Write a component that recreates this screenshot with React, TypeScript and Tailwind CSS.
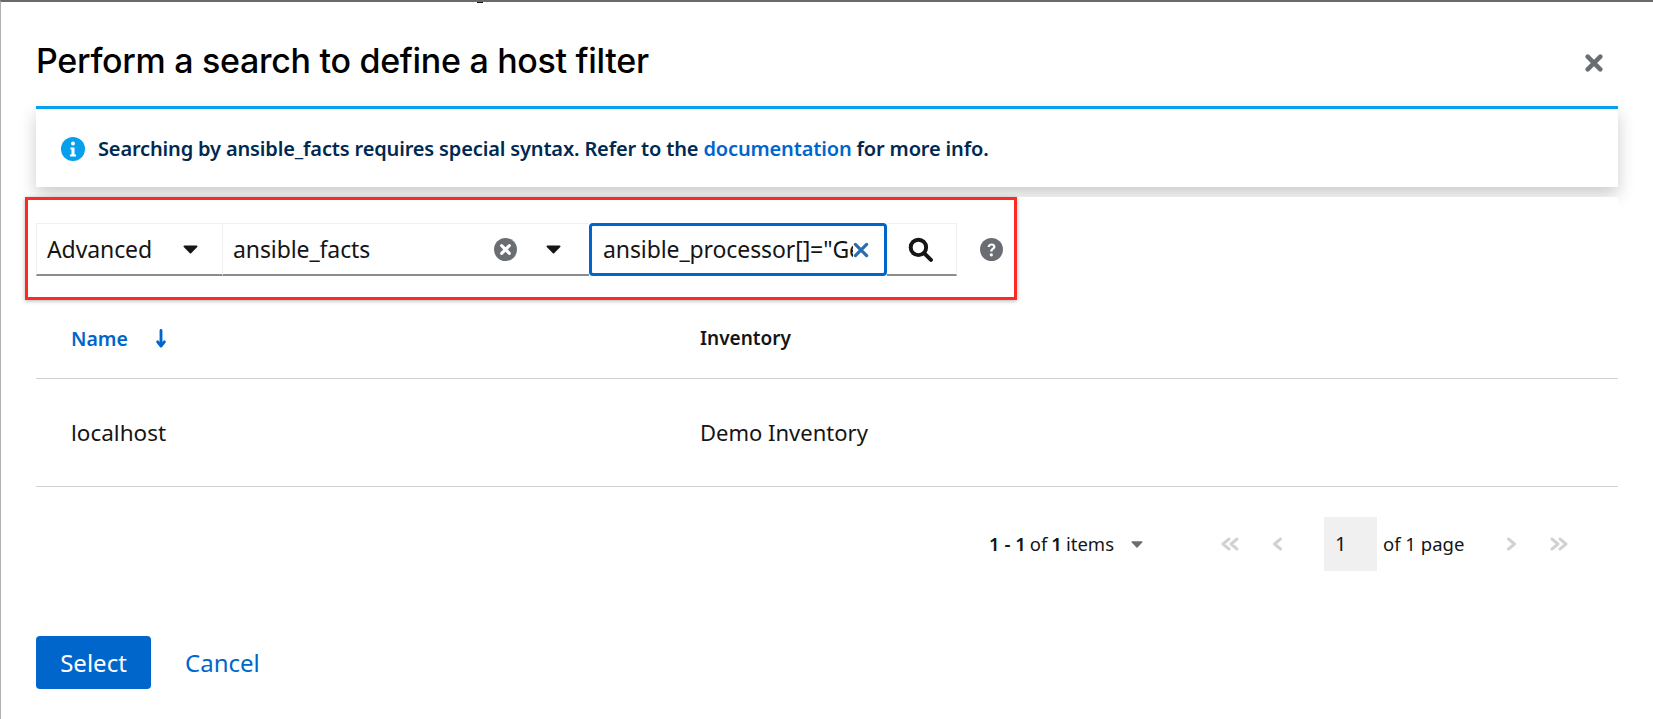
import React from 'react';

const display = 'font-["Inter","Noto_Sans",sans-serif]';

const Caret = ({ className = '' }: { className?: string }) => (
    <svg viewBox="0 0 16 10" className={className} fill="currentColor">
        <path d="M1.2 0.5h13.6c.9 0 1.3 1 .7 1.7L8.7 9.2c-.4.4-1 .4-1.4 0L.5 2.2C-.1 1.5.3.5 1.2.5z" />
    </svg>
);

const DoubleLeft = () => (
    <svg viewBox="0 0 20 14" className="w-[20px] h-[14px] text-[#d2d2d2]" fill="none" stroke="currentColor" strokeWidth="3" strokeLinecap="round" strokeLinejoin="round">
        <path d="M9 2L3 7l6 5M17 2l-6 5 6 5" />
    </svg>
);

const SingleLeft = () => (
    <svg viewBox="0 0 11 14" className="w-[11px] h-[14px] text-[#d2d2d2]" fill="none" stroke="currentColor" strokeWidth="3" strokeLinecap="round" strokeLinejoin="round">
        <path d="M8.5 2L2.5 7l6 5" />
    </svg>
);

const SingleRight = () => (
    <svg viewBox="0 0 11 14" className="w-[11px] h-[14px] text-[#d2d2d2]" fill="none" stroke="currentColor" strokeWidth="3" strokeLinecap="round" strokeLinejoin="round">
        <path d="M2.5 2l6 5-6 5" />
    </svg>
);

const DoubleRight = () => (
    <svg viewBox="0 0 20 14" className="w-[20px] h-[14px] text-[#d2d2d2]" fill="none" stroke="currentColor" strokeWidth="3" strokeLinecap="round" strokeLinejoin="round">
        <path d="M3 2l6 5-6 5M11 2l6 5-6 5" />
    </svg>
);

const App = () => {
    return (
        <div className="relative w-[1653px] h-[719px] overflow-hidden bg-white border-l border-t-2 border-l-[#b0b0b0] border-t-[#6a6a6a] font-['Noto_Sans',sans-serif] text-[#151515]">
            <div className="absolute left-[476px] top-0 w-[6px] h-[1px] bg-[#151515]"></div>

            <div className="flex items-center justify-between pl-[35px] pr-[50px] pt-[36px] h-[104px]">
                <h1 className={`${display} text-[34px] leading-[48px] font-medium tracking-[-0.3px] text-black -mt-[22px]`}>Perform a search to define a host filter</h1>
                <svg viewBox="0 0 20 20" className="w-[18px] h-[18px] text-[#6a6e73] -mt-[19px]" fill="none" stroke="currentColor" strokeWidth="5" strokeLinecap="round">
                    <path d="M3 3l14 14M17 3L3 17" />
                </svg>
            </div>

            {/* Info alert */}
            <div className="ml-[35px] w-[1582px] h-[81px] border-t-[3px] border-[#06a0ee] bg-white shadow-[0_8px_16px_rgba(0,0,0,0.2)] flex items-center pl-[25px] pt-[2px] text-[20px] font-semibold text-[#002952]">
                <svg viewBox="0 0 24 24" className="w-[24px] h-[24px] mr-[13px] shrink-0">
                    <circle cx="12" cy="12" r="12" fill="#06a0ee" />
                    <circle cx="12" cy="6.5" r="2" fill="#fff" />
                    <path d="M9.5 10.5h4v7h1.5v2h-6v-2h1.5v-5h-1z" fill="#fff" />
                </svg>
                <span className="tracking-[-0.15px]">Searching by ansible_facts requires special syntax. Refer to the <span className="text-[#0066cc]">documentation</span> for more info.</span>
            </div>

            {/* Search toolbar, outlined in red */}
            <div className="relative ml-[35px] mt-[10px] w-[1582px] bg-white">
                <div className="-ml-[11px] w-[992px] h-[103px] border-[3px] border-[#fb2a26] shadow-[0_1px_4px_rgba(0,0,0,0.3)] flex items-center pl-[8px] pt-[2px] text-[23px] tracking-[-0.1px] bg-white">
                    <div className="flex h-[53px] w-[187px] items-center justify-between pl-[10px] pr-[24px] border border-[#f0f0f0] border-b-2 border-b-[#8a8d90]">
                        <span>Advanced</span>
                        <Caret className="w-[15px] h-[9px] text-[#151515]" />
                    </div>
                    <div className="flex h-[53px] w-[366px] items-center pl-[10px] pr-[28px] border-t border-[#f0f0f0] border-b-2 border-b-[#8a8d90]">
                        <span className="flex-1">ansible_facts</span>
                        <svg viewBox="0 0 24 24" className="w-[23px] h-[23px] mr-[29px]">
                            <circle cx="12" cy="12" r="12" fill="#6a6e73" />
                            <path d="M8 8l8 8M16 8l-8 8" stroke="#fff" strokeWidth="3.2" strokeLinecap="round" />
                        </svg>
                        <Caret className="w-[15px] h-[9px] text-[#151515]" />
                    </div>
                    <div className="flex h-[53px] w-[298px] items-center rounded-[4px] border-[3px] border-[#0066cc] pl-[11px] pr-[9px]">
                        <input readOnly value='ansible_processor[]="GenuineIntel"' className="w-[250px] bg-transparent outline-none" />
                        <svg viewBox="0 0 20 20" className="w-[16px] h-[16px] text-[#2b6cb0] shrink-0" fill="none" stroke="currentColor" strokeWidth="4" strokeLinecap="round">
                            <path d="M3 3l14 14M17 3L3 17" />
                        </svg>
                    </div>
                    <div className="flex h-[53px] w-[70px] items-center justify-center border-t border-r border-[#f0f0f0] border-b-2 border-b-[#8a8d90]">
                        <svg viewBox="0 0 24 24" className="w-[25px] h-[25px] -ml-[2px]" fill="none" stroke="#151515" strokeWidth="3.8" strokeLinecap="round">
                            <circle cx="10" cy="10" r="7.4" />
                            <path d="M15.5 15.5L22 22" />
                        </svg>
                    </div>
                    <svg viewBox="0 0 24 24" className="w-[23px] h-[23px] ml-[23px]">
                        <circle cx="12" cy="12" r="12" fill="#6a6e73" />
                        <path d="M8 9.5c0-2.4 1.8-3.8 4.1-3.8 2.3 0 4 1.3 4 3.4 0 2.8-3.1 2.8-3.1 5h-2.4c0-3.4 3-3.4 3-5 0-.9-.7-1.4-1.6-1.4-1 0-1.6.7-1.6 1.8z" fill="#fff" />
                        <circle cx="11.8" cy="17.6" r="1.7" fill="#fff" />
                    </svg>
                </div>
            </div>

            {/* Table */}
            <div className="ml-[35px] w-[1582px]">
                <div className="flex h-[79px] items-center border-b border-[#d2d2d2] pb-[1px] font-semibold">
                    <div className="w-[664px] pl-[35px] flex items-center text-[#0066cc] text-[19.5px]">
                        <span>Name</span>
                        <svg viewBox="0 0 12 20" className="w-[12px] h-[19px] ml-[27px]" fill="none" stroke="currentColor" strokeWidth="3" strokeLinecap="round" strokeLinejoin="round">
                            <path d="M6 1.5v16M2.5 13.5L6 18l3.5-4.5" />
                        </svg>
                    </div>
                    <div className="text-[#151515] text-[19px]">Inventory</div>
                </div>
                <div className="flex h-[108px] items-center border-b border-[#d2d2d2] text-[22px]">
                    <div className="w-[664px] pl-[35px] text-[22.5px]">localhost</div>
                    <div>Demo Inventory</div>
                </div>
            </div>

            {/* Pagination */}
            <div className="flex justify-end items-center ml-[35px] w-[1582px] mt-[30px] pr-[49px] text-[18.5px]">
                <span className="font-semibold">1 - 1</span>
                <span className="ml-[4px]">of</span>
                <span className="font-semibold ml-[4px]">1</span>
                <span className="ml-[4px]">items</span>
                <Caret className="w-[12px] h-[7px] text-[#6a6e73] ml-[17px]" />
                <div className="ml-[77px] flex items-center gap-[32px]">
                    <DoubleLeft />
                    <SingleLeft />
                </div>
                <div className="ml-[41px] w-[53px] h-[54px] bg-[#f0f0f0] flex items-center pl-[11px] text-[20px]">1</div>
                <span className="ml-[6px] w-[80px] whitespace-nowrap">of 1 page</span>
                <div className="ml-[43px] flex items-center gap-[32px]">
                    <SingleRight />
                    <DoubleRight />
                </div>
            </div>

            {/* Footer actions */}
            <div className="flex items-center ml-[35px] mt-[65px] text-[24px]">
                <button className="h-[53px] w-[115px] rounded-[4px] bg-[#0066cc] text-white">Select</button>
                <button className="ml-[34px] text-[#0066cc]">Cancel</button>
            </div>
        </div>
    );
};

export default App;
